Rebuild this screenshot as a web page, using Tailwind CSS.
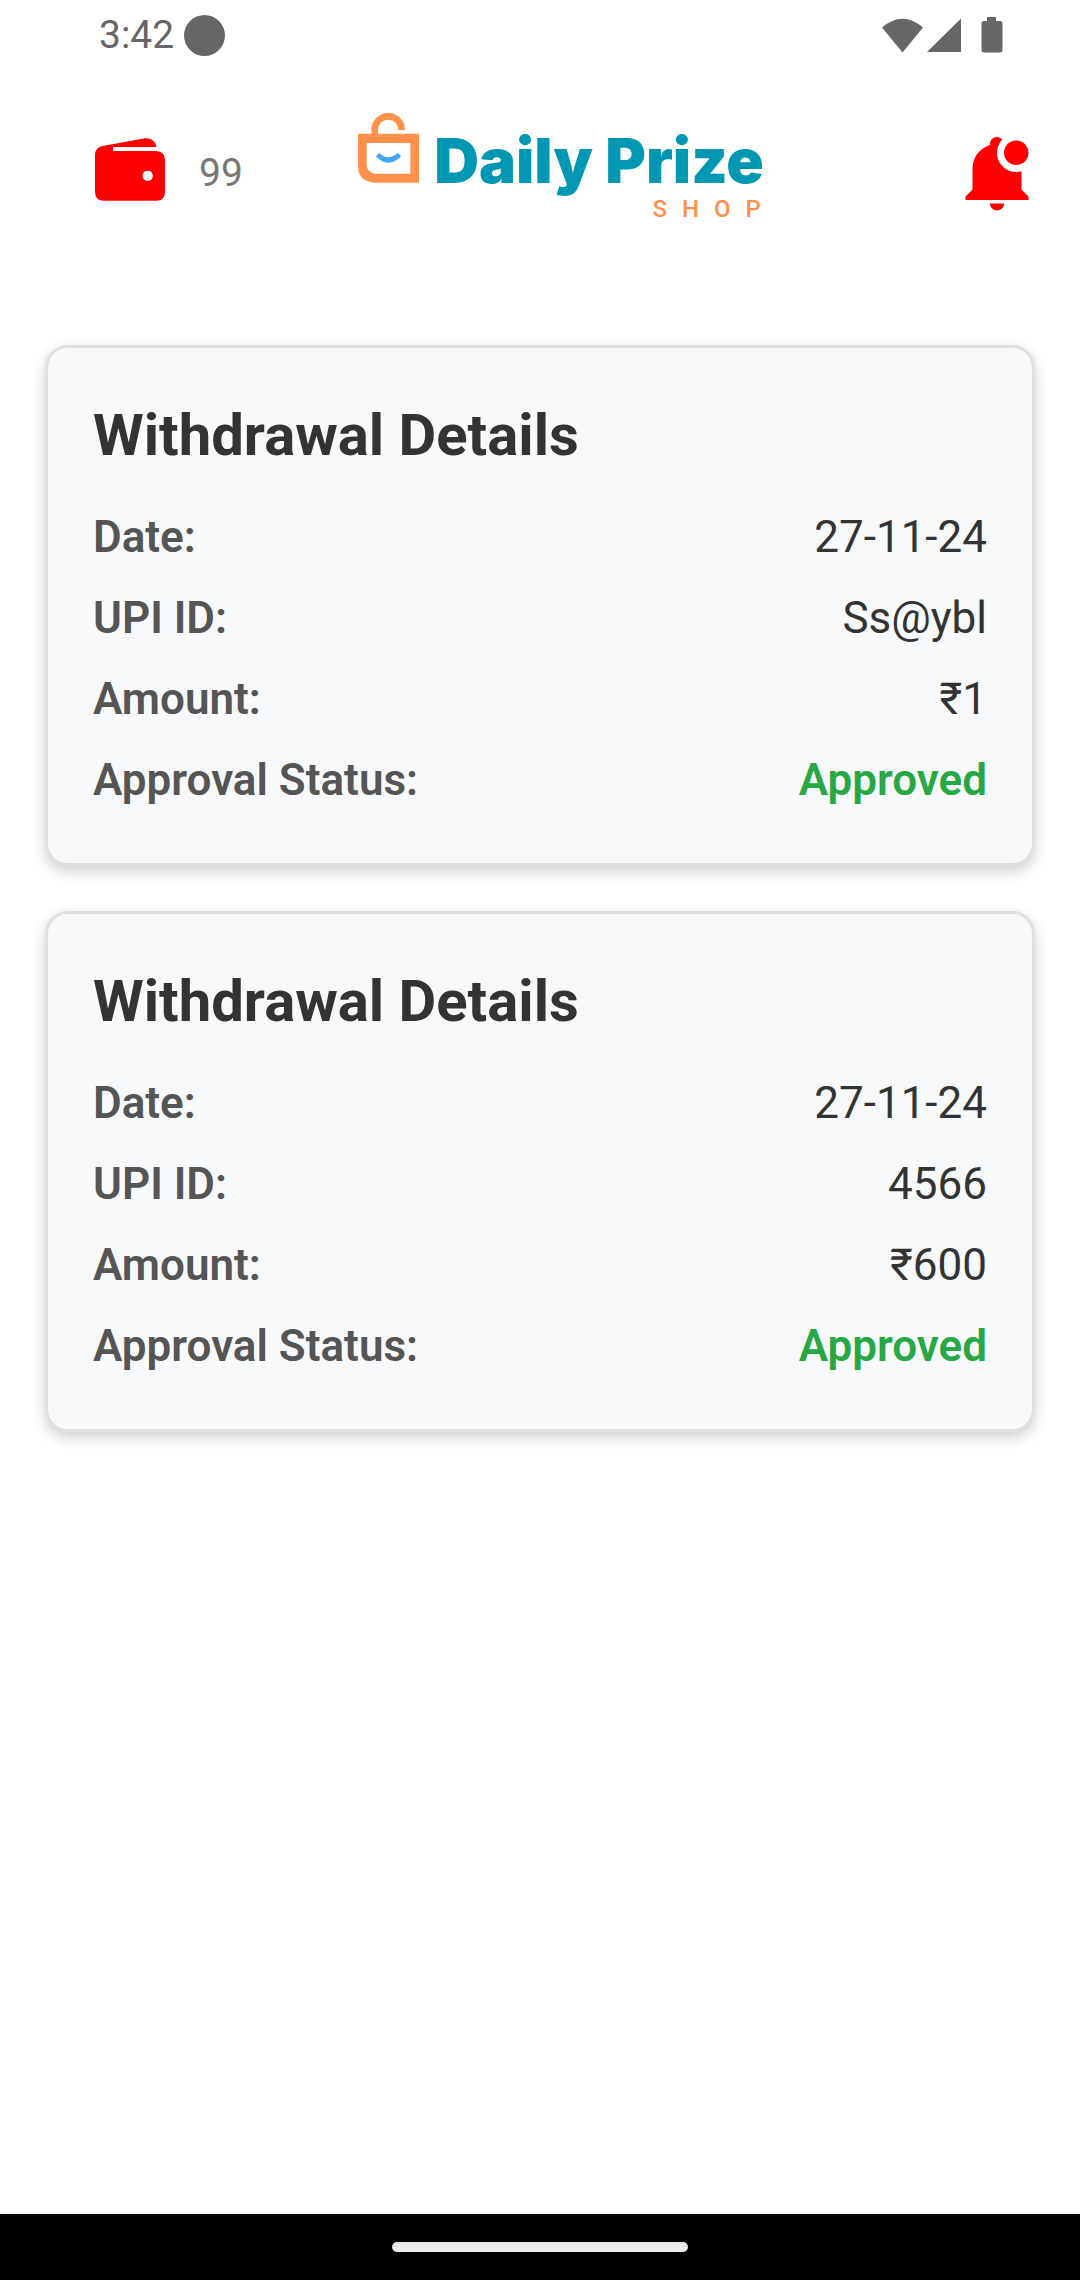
<!DOCTYPE html>
<html lang="en">
<head>
<meta charset="utf-8">
<meta name="viewport" content="width=device-width, initial-scale=1">
<title>Daily Prize Shop</title>
<script src="https://cdn.jsdelivr.net/npm/@tailwindcss/browser@4"></script>
</head>
<body class="bg-white font-[Roboto,sans-serif]">
<div class="flex min-h-screen flex-col">
  <div class="flex h-[70px] items-center justify-between pr-[77px] pl-[99px] text-[#666]">
    <div class="flex items-center gap-2.5">
      <time class="text-[39px] leading-[46px]">3:42</time>
      <span class="size-[41px] rounded-full bg-[#666]"></span>
    </div>
    <svg class="h-9 w-[121px]" viewBox="0 0 121 36" fill="currentColor" aria-hidden="true">
      <path d="M0 10.500Q20.500-7 41 10.500L20.500 35.500z"/>
      <path d="M79 1.500V35H45z"/>
      <path d="M105 0h9v4h4q2.500 0 2.500 2.500v26.500q0 2.500-2.500 2.500h-16q-2.500 0-2.500-2.500V6.500q0-2.500 2.500-2.500h3z"/>
    </svg>
  </div>

  <header class="grid h-[206px] grid-cols-[1fr_auto_1fr] items-start pt-[43px] pr-[41px] pl-[83px]">
    <div class="flex items-center gap-[34px] pt-[25px] pl-3">
      <svg class="h-[70px] w-[70px] pb-1.5" viewBox="0 0 210 192" fill="red" aria-hidden="true">
        <path fill-rule="evenodd" d="M0 51Q0 27 27 23L150 1C166-2 183 10 184 27H57q-3 0-3 3v9H183Q210 40 210 67v94q0 27-27 27H27Q0 188 0 161zM158 98a15.500 15.500 0 1 0 .1 0z"/>
      </svg>
      <span class="text-[39px] leading-[46px] text-[#777]">99</span>
    </div>
    <div class="flex items-start gap-[15px]">
      <svg class="h-[71px] w-[61px]" viewBox="0 0 183 213" aria-hidden="true">
        <path fill="none" stroke="#ff914d" stroke-width="20" d="M50 66V50a40 40 0 0 1 81 1"/>
        <path fill="#ff914d" fill-rule="evenodd" d="M0 62H183V209H50Q0 205 0 160zM26 90V160Q30 178 48 182H157V90z"/>
        <path fill="none" stroke="#3fa9f5" stroke-width="15" d="M59 125q32 32 65 0"/>
      </svg>
      <div class="flex flex-col items-end pt-3">
        <span class="font-[Inter,sans-serif] text-[62px] leading-[72px] font-black text-[#0097b2]">Daily Prize</span>
        <span class="-mr-3 text-[24px] leading-6 font-medium tracking-[15px] text-[#ff914d]">SHOP</span>
      </div>
    </div>
    <button type="button" aria-label="Notifications" class="justify-self-end pt-[17px]">
      <svg class="size-[84px]" viewBox="0 0 24 24" fill="red" aria-hidden="true">
        <path d="M21 6.500C21 8.430 19.430 10 17.500 10S14 8.430 14 6.500 15.570 3 17.500 3 21 4.570 21 6.500M19 11.790C18.500 11.920 18 12 17.500 12C14.470 12 12 9.530 12 6.500C12 5.030 12.580 3.700 13.500 2.710C13.150 2.280 12.610 2 12 2C10.900 2 10 2.900 10 4V4.290C7.030 5.170 5 7.900 5 11V17L3 19V20H21V19L19 17V11.790M12 23C13.110 23 14 22.110 14 21H10C10 22.110 10.900 23 12 23Z"/>
      </svg>
    </button>
  </header>

  <main class="flex flex-1 flex-col gap-[45px] px-[45px] pt-[69px]">
    <section class="rounded-[23px] border-[3px] border-[#e0e0e0] bg-[#f8f9fb] px-[45px] pt-[53px] pb-14 shadow-[0_5px_14px_rgba(0,0,0,0.2)]">
      <h2 class="mb-[42px] text-[58px] leading-[68px] font-bold text-[#333]">Withdrawal Details</h2>
      <dl class="flex flex-col gap-7 text-[44px] leading-[53px]">
        <div class="flex justify-between"><dt class="font-semibold text-[#555]">Date:</dt><dd class="text-[#333]">27-11-24</dd></div>
        <div class="flex justify-between"><dt class="font-semibold text-[#555]">UPI ID:</dt><dd class="text-[#333]">Ss@ybl</dd></div>
        <div class="flex justify-between"><dt class="font-semibold text-[#555]">Amount:</dt><dd class="text-[#333]">₹1</dd></div>
        <div class="flex justify-between"><dt class="font-semibold text-[#555]">Approval Status:</dt><dd class="font-semibold text-[#28a745]">Approved</dd></div>
      </dl>
    </section>
    <section class="rounded-[23px] border-[3px] border-[#e0e0e0] bg-[#f8f9fb] px-[45px] pt-[53px] pb-14 shadow-[0_5px_14px_rgba(0,0,0,0.2)]">
      <h2 class="mb-[42px] text-[58px] leading-[68px] font-bold text-[#333]">Withdrawal Details</h2>
      <dl class="flex flex-col gap-7 text-[44px] leading-[53px]">
        <div class="flex justify-between"><dt class="font-semibold text-[#555]">Date:</dt><dd class="text-[#333]">27-11-24</dd></div>
        <div class="flex justify-between"><dt class="font-semibold text-[#555]">UPI ID:</dt><dd class="text-[#333]">4566</dd></div>
        <div class="flex justify-between"><dt class="font-semibold text-[#555]">Amount:</dt><dd class="text-[#333]">₹600</dd></div>
        <div class="flex justify-between"><dt class="font-semibold text-[#555]">Approval Status:</dt><dd class="font-semibold text-[#28a745]">Approved</dd></div>
      </dl>
    </section>
  </main>

  <footer class="flex h-[66px] items-center justify-center bg-black">
    <span class="h-2.5 w-[296px] rounded-full bg-[#ebebeb]"></span>
  </footer>
</div>
</body>
</html>
